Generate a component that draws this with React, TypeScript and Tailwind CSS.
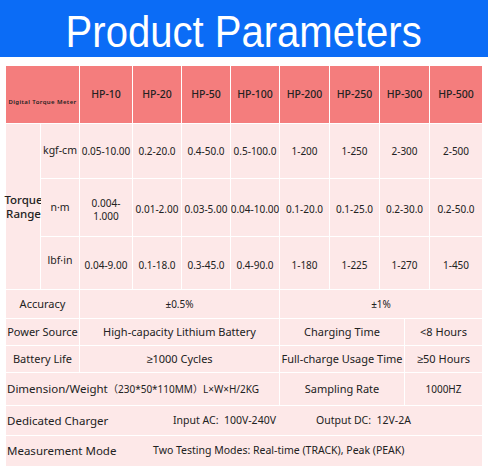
import React from "react";

const hp = ["HP-10", "HP-20", "HP-50", "HP-100", "HP-200", "HP-250", "HP-300", "HP-500"];
const kgf = ["0.05-10.00", "0.2-20.0", "0.4-50.0", "0.5-100.0", "1-200", "1-250", "2-300", "2-500"];
const nm = ["0.004-\n1.000", "0.01-2.00", "0.03-5.00", "0.04-10.00", "0.1-20.0", "0.1-25.0", "0.2-30.0", "0.2-50.0"];
const lbf = ["0.04-9.00", "0.1-18.0", "0.3-45.0", "0.4-90.0", "1-180", "1-225", "1-270", "1-450"];

const body = "bg-[#fde8e8] flex items-center justify-center text-center";
const head = "bg-[#f47d7d] flex items-center justify-center text-center";

function Ge() {
  return <span className="font-['Liberation_Sans',sans-serif]">≥</span>;
}

export default function App() {
  return (
    <div className="w-[488px] h-[468px] bg-white overflow-hidden text-[#222] font-['Noto_Sans','Noto_Sans_CJK_SC',sans-serif]">
      <div className="h-[57px] bg-[#0b6cf6] flex items-center justify-center pt-[6px]">
        <div className="text-white text-[44px] leading-none scale-x-[0.91] font-['Liberation_Sans',Arial,sans-serif] whitespace-nowrap">
          Product Parameters
        </div>
      </div>
      <div className="px-[6px] pt-[9px]">
        <div className="flex flex-col gap-px bg-white">
          <div className="grid grid-cols-[34px_38px_52px_48px_48px_48px_49px_49px_49px_52px] grid-rows-[57px_54px_57px_52px_28px] gap-px">
            <div className={`${head} col-span-2 pt-[15px]`}>
              <span className="text-[6px] font-semibold tracking-[0.4px] whitespace-nowrap">Digital Torque Meter</span>
            </div>
            {hp.map((h) => (
              <div key={h} className={`${head} text-[10.5px] font-medium whitespace-nowrap`}>{h}</div>
            ))}
            <div className={`${body} row-span-3 col-start-1 row-start-2 text-[11.5px] font-medium leading-[14px] pl-[1px]`}>
              <span className="whitespace-nowrap">
                Torque
                <br />
                Range
              </span>
            </div>
            <div className={`${body} text-[10.5px] col-start-2 row-start-2 whitespace-nowrap`}>kgf-cm</div>
            {kgf.map((v, i) => (
              <div key={"k" + i} className={`${body} text-[10px] row-start-2 whitespace-nowrap`}>{v}</div>
            ))}
            <div className={`${body} text-[10.5px] col-start-2 row-start-3`}>n·m</div>
            {nm.map((v, i) => (
              <div key={"n" + i} className={`${body} text-[10px] leading-[13px] whitespace-pre row-start-3 pt-[4px]`}>{v}</div>
            ))}
            <div className={`${body} text-[10.5px] col-start-2 row-start-4 pb-[4px]`}>lbf·in</div>
            {lbf.map((v, i) => (
              <div key={"l" + i} className={`${body} text-[10px] row-start-4 pt-[4px] whitespace-nowrap`}>{v}</div>
            ))}
            <div className={`${body} col-span-2 text-[11px]`}>Accuracy</div>
            <div className={`${body} col-span-4 text-[10px]`}>±0.5%</div>
            <div className={`${body} col-span-4 text-[10px]`}>±1%</div>
          </div>

          <div className="grid grid-cols-[73px_199px_124px_77px] grid-rows-[26px_26px] gap-px text-[11px]">
            <div className={`${body} whitespace-nowrap`}>Power Source</div>
            <div className={body}>High-capacity Lithium Battery</div>
            <div className={body}>Charging Time</div>
            <div className={body}>&lt;8 Hours</div>
            <div className={body}>Battery Life</div>
            <div className={body}>
              <span>
                <Ge />1000 Cycles
              </span>
            </div>
            <div className={`${body} whitespace-nowrap`}>Full-charge Usage Time</div>
            <div className={body}>
              <span>
                <Ge />50 Hours
              </span>
            </div>
          </div>

          <div className="grid grid-cols-[273px_124px_77px] h-[32px] gap-px text-[11px]">
            <div className="bg-[#fde8e8] flex items-center pl-[1px] whitespace-nowrap">
              <span className="w-[101px] text-[11.5px]">Dimension/Weight</span>
              <span className="text-[10px]">（230*50*110MM）L×W×H/2KG</span>
            </div>
            <div className={body}>Sampling Rate</div>
            <div className={`${body} text-[10px]`}>1000HZ</div>
          </div>

          <div className="bg-[#fde8e8] h-[29px] grid grid-cols-[166px_143px_1fr] items-center pl-[1px] whitespace-nowrap">
            <span className="text-[11.5px]">Dedicated Charger</span>
            <span className="text-[10.5px]">Input AC:&nbsp; 100V-240V</span>
            <span className="text-[10.5px]">Output DC:&nbsp; 12V-2A</span>
          </div>

          <div className="bg-[#fde8e8] h-[30px] flex items-center pl-[1px] whitespace-nowrap">
            <span className="w-[146px] text-[11.5px]">Measurement Mode</span>
            <span className="text-[10.5px]">Two Testing Modes: Real-time (TRACK), Peak (PEAK)</span>
          </div>
        </div>
      </div>
    </div>
  );
}
